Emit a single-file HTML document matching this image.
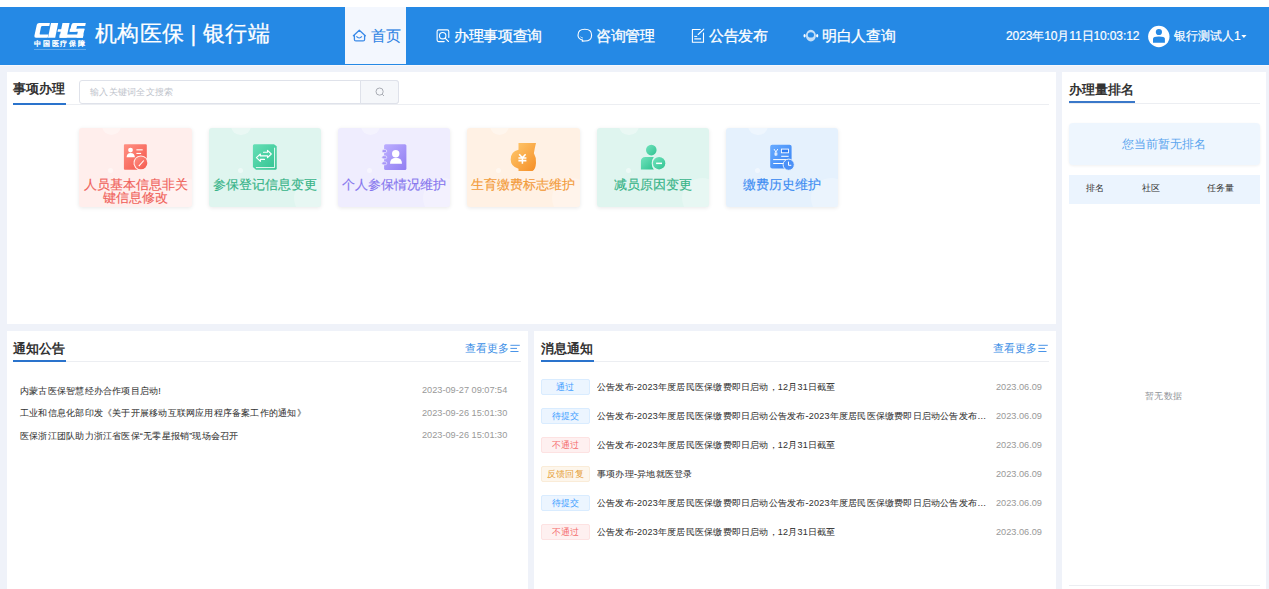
<!DOCTYPE html>
<html><head><meta charset="utf-8">
<style>
*{margin:0;padding:0;box-sizing:border-box}
html,body{width:1269px;height:589px;overflow:hidden}
body{background:#eff2f9;font-family:"Liberation Sans",sans-serif;position:relative;color:#333}
.a{position:absolute;white-space:nowrap;line-height:1}
#top{position:absolute;left:0;top:0;width:1269px;height:7px;background:#fff}
#hdr{position:absolute;left:0;top:7px;width:1269px;height:58px;background:#2589e5}
#hl{position:absolute;left:0;top:65px;width:1269px;height:1px;background:#f7f8fc}
.tab{position:absolute;left:345px;top:7px;width:61px;height:57px;background:#f3f7fe}
.nav{color:#fff;font-size:15px;letter-spacing:-0.35px;-webkit-text-stroke:0.3px currentColor}
.panel{position:absolute;background:#fff}
.ttl{font-size:13.2px;font-weight:bold;color:#333}
.uline{position:absolute;height:2px;background:#2a73cc}
.gline{position:absolute;height:1px;background:#eceef2}

.card{position:absolute;top:128px;width:112.3px;height:79px;border-radius:3px;box-shadow:0 1px 4px rgba(0,0,0,.09);overflow:hidden}
.card .c1{position:absolute;left:22.5px;top:-12.2px;width:19.6px;height:19.6px;border-radius:50%;background:rgba(255,255,255,.35)}
.card .c2{position:absolute;left:29px;top:40px;width:5px;height:5px;border-radius:50%;background:rgba(255,255,255,.45)}
.card .c3{position:absolute;left:85px;top:50px;width:40px;height:40px;border-radius:50%;background:rgba(255,255,255,.25)}
.card svg{position:absolute;left:38.6px;top:12px}
.card .t{position:absolute;left:0;top:50px;width:112.3px;text-align:center;font-size:13px;line-height:13px;white-space:normal;padding:0 4px;-webkit-text-stroke:0.15px currentColor}
.lst{font-size:9px;letter-spacing:0.22px;color:#333;-webkit-text-stroke:0.05px #333}
.msg{font-size:9px;letter-spacing:0.22px;color:#333;-webkit-text-stroke:0.05px #333;overflow:hidden;text-overflow:ellipsis;width:392px}
.dt{font-size:9.2px;color:#999}
.more{font-size:11px;color:#3a8ee6}
.tag{position:absolute;left:541px;width:49px;height:16px;border-radius:2px;font-size:9px;letter-spacing:0.3px;text-align:center;line-height:14px;border:1px solid}
.tb{background:#ecf5ff;border-color:#d9ecff;color:#409eff}
.tr{background:#fef0f0;border-color:#fde2e2;color:#f56c6c}
.ty{background:#fdf6ec;border-color:#faecd8;color:#e6a23c}
</style></head><body>
<div id="top"></div>
<div id="hdr"></div>
<div id="hl"></div>
<div class="tab"></div>

<!-- logo -->
<svg class="a" style="left:0;top:0" width="100" height="60" viewBox="0 0 100 60">
 <g fill="#fff">
  <path d="M39.2 23 L49.9 23 L49.3 26 L42.3 26 Q41.2 26 41 27.1 L39.7 33.4 Q39.5 34.6 40.7 34.6 L48.3 34.6 L47.7 37.7 L36 37.7 Q34 37.7 34.4 35.8 L36.8 24.8 Q37.2 23 39.2 23 Z"/>
  <polygon points="51,23 58.2,23 55.2,37.7 48,37.7"/>
  <polygon points="58,29.2 63,29.2 62.5,31.7 57.5,31.7"/>
  <polygon points="62.5,23.1 69.6,23.1 66.6,37.7 59.5,37.7"/>
  <polygon points="59.5,34.6 83.5,34.6 82.9,37.7 59.5,37.7"/>
  <path d="M73.7 23.1 L85.8 23.1 L85.2 26.1 L77 26.1 L75.6 31.7 L69.9 31.7 L71.4 24.9 Q71.8 23.1 73.7 23.1 Z"/>
  <polygon points="70,28.8 84.5,28.8 83.9,31.7 69.4,31.7"/>
  <polygon points="78.4,28.8 84.5,28.8 82.7,37.7 76.6,37.7"/>
 </g>
</svg>
<div class="a" style="left:34px;top:39.5px;font-size:7px;color:#fff;letter-spacing:1.8px;-webkit-text-stroke:0.35px #fff">中国医疗保障</div>
<div class="a" style="left:34px;top:49px;width:52px;height:1px;background:rgba(255,255,255,.28)"></div>

<div class="a" style="left:95px;top:23px;font-size:22px;color:#fff;letter-spacing:0.3px;-webkit-text-stroke:0.25px #fff">机构医保 | 银行端</div>

<!-- nav -->
<svg class="a" style="left:350px;top:26px" width="20" height="20" viewBox="0 0 20 20"><path d="M3.4 9.8 L9.3 4.3 L15.3 9.8" fill="none" stroke="#3a8ae8" stroke-width="1.3" stroke-linejoin="round" stroke-linecap="round"/><path d="M4.4 9 V13.4 Q4.4 14.9 5.9 14.9 H13.1 Q14.6 14.9 14.6 13.4 V9" fill="none" stroke="#3a8ae8" stroke-width="1.3"/><path d="M6.4 10.4 Q9.2 13.6 11.9 10.4" fill="none" stroke="#3a8ae8" stroke-width="1.2"/></svg>
<div class="a nav" style="left:371px;top:28px;color:#2f84e4;-webkit-text-stroke:0.1px #2f84e4">首页</div>

<svg class="a" style="left:433px;top:26px" width="20" height="20" viewBox="0 0 20 20"><path d="M15.8 11.5 V5.4 Q15.8 3.9 14.3 3.9 H5.6 Q4.1 3.9 4.1 5.4 V14.1 Q4.1 15.6 5.6 15.6 H11.2" fill="none" stroke="#fff" stroke-width="1.1" stroke-linecap="round"/><circle cx="9.7" cy="9.7" r="3.2" fill="none" stroke="#fff" stroke-width="1.1"/><path d="M12.1 12.1 L15.5 15.5" stroke="#fff" stroke-width="1.1" stroke-linecap="round"/></svg>
<div class="a nav" style="left:454px;top:28px">办理事项查询</div>

<svg class="a" style="left:575px;top:26px" width="20" height="20" viewBox="0 0 20 20"><path d="M7.3 15.1 L7.6 14.1 Q3 12.8 3 9.2 Q3 3.3 9.8 3.3 Q16.6 3.3 16.6 9.2 Q16.6 15 9.8 15 Q8.6 15 7.3 15.1 Z" fill="none" stroke="#fff" stroke-width="1.1" stroke-linejoin="round"/><path d="M5.5 10.8 Q6.5 11.8 7.8 12" fill="none" stroke="#fff" stroke-width="0.9"/></svg>
<div class="a nav" style="left:596px;top:28px">咨询管理</div>

<svg class="a" style="left:688px;top:26px" width="20" height="20" viewBox="0 0 20 20"><path d="M12.2 3.5 H4.4 V16.3 H15.5 V7.1" fill="none" stroke="#fff" stroke-width="1.1" stroke-linecap="round" stroke-linejoin="round"/><path d="M10.2 8.5 L15.8 3.2" stroke="#fff" stroke-width="1.1" stroke-linecap="round"/><path d="M6.6 10.4 H8.8" stroke="#fff" stroke-width="1" stroke-linecap="round"/><rect x="6.3" y="12" width="6.8" height="1.7" fill="rgba(255,255,255,.7)"/></svg>
<div class="a nav" style="left:709px;top:28px">公告发布</div>

<svg class="a" style="left:801px;top:26px" width="20" height="20" viewBox="0 0 20 20"><path fill-rule="evenodd" d="M4.9 9.6 A5 5.9 0 1 0 14.9 9.6 A5 5.9 0 1 0 4.9 9.6 Z M6.8 8.9 A3.1 2.7 0 1 0 13 8.9 A3.1 2.7 0 1 0 6.8 8.9 Z" fill="rgba(255,255,255,.72)"/><ellipse cx="3.6" cy="9.8" rx="1.1" ry="1.7" fill="#fff"/><ellipse cx="16.2" cy="9.8" rx="1.1" ry="1.7" fill="#fff"/></svg>
<div class="a nav" style="left:822px;top:28px">明白人查询</div>

<div class="a" style="left:1006px;top:30px;font-size:12px;letter-spacing:-0.1px;color:#fff;-webkit-text-stroke:0.2px #fff">2023年10月11日10:03:12</div>
<svg class="a" style="left:1145px;top:24px" width="28" height="26" viewBox="0 0 28 26"><circle cx="13.8" cy="12.5" r="10.7" fill="#fff"/><circle cx="13.9" cy="8" r="3.1" fill="#2589e5"/><path d="M8 18.8 V14.6 Q8 12.4 13.9 12.4 Q19.9 12.4 19.9 14.6 V18.8 Z" fill="#2589e5"/></svg>
<div class="a" style="left:1174px;top:30px;font-size:12px;color:#fff;-webkit-text-stroke:0.2px #fff">银行测试人1</div>
<svg class="a" style="left:1240px;top:34px" width="8" height="5" viewBox="0 0 8 5"><path d="M1.3 1 L6.5 1 L3.9 4Z" fill="#fff"/></svg>

<!-- panels -->
<div class="panel" style="left:7px;top:72px;width:1049px;height:252px"></div>
<div class="panel" style="left:1062px;top:72px;width:204px;height:517px"></div>
<div class="panel" style="left:7px;top:331px;width:521px;height:258px"></div>
<div class="panel" style="left:534px;top:331px;width:522px;height:258px"></div>

<!-- 事项办理 -->
<div class="a ttl" style="left:13px;top:82px">事项办理</div>
<div class="gline" style="left:13px;top:104px;width:1036px"></div>
<div class="uline" style="left:13px;top:103px;width:53px"></div>
<div class="a" style="left:79px;top:80px;width:320px;height:24px;border:1px solid #dfe2ea;border-radius:3px;background:#fff"></div>
<div class="a" style="left:360px;top:80px;width:39px;height:24px;border:1px solid #dfe2ea;border-radius:0 3px 3px 0;background:#f5f7fa"></div>
<svg class="a" style="left:375px;top:87px" width="10" height="10" viewBox="0 0 10 10"><circle cx="4.6" cy="4.6" r="3.6" fill="none" stroke="#a0a4ab" stroke-width="0.9"/><path d="M7.2 7.2 L9 9" stroke="#a0a4ab" stroke-width="0.9"/></svg>
<div class="a" style="left:90px;top:88px;font-size:9px;letter-spacing:0.3px;color:#c0c4cc">输入关键词全文搜索</div>

<div class="card" style="left:79.4px;background:#ffeeec"><div class="c1"></div><div class="c2"></div><div class="c3"></div><svg width="35" height="35" viewBox="0 0 35 35"><defs><linearGradient id="g1" x1="0" y1="0" x2="1" y2="1"><stop offset="0" stop-color="#ff9184"/><stop offset="1" stop-color="#f4554a"/></linearGradient></defs>
<path d="M6.9 4.2 H27.8 Q28.8 4.2 28.8 5.2 V18.3 A7.5 7.5 0 1 0 19.7 29.7 H6.9 Q5.9 29.7 5.9 28.7 V5.2 Q5.9 4.2 6.9 4.2 Z" fill="url(#g1)"/>
<circle cx="12.5" cy="10.1" r="2.4" fill="#fff"/><path d="M8.6 17.2 Q8.8 12.9 12.7 12.9 Q16.6 12.9 16.9 17.2 Z" fill="#fff"/>
<rect x="18.4" y="9.3" width="6.3" height="1.1" fill="#fff"/><rect x="18.4" y="12.9" width="4.7" height="1.1" fill="#fff"/>
<circle cx="22.9" cy="22.9" r="6.4" fill="url(#g1)"/>
<path d="M20.8 26.1 L25.8 20.5" stroke="#fff" stroke-width="1.1"/></svg><div class="t" style="color:#f0625a">人员基本信息非关键信息修改</div></div>
<div class="card" style="left:208.7px;background:#dff5ef"><div class="c1"></div><div class="c2"></div><div class="c3"></div><svg width="35" height="35" viewBox="0 0 35 35"><defs><linearGradient id="g2" x1="0" y1="0" x2="1" y2="1"><stop offset="0" stop-color="#66dfb6"/><stop offset="1" stop-color="#32c391"/></linearGradient></defs>
<path d="M7.4 4.2 H27 L29.7 6.2 V28.2 Q29.7 29.7 28.2 29.7 H9 L5.9 27 V5.7 Q5.9 4.2 7.4 4.2Z" fill="url(#g2)"/>
<path d="M8.9 27.6 H27.6 V7.7" fill="none" stroke="#fff" stroke-width="0.9"/>
<path d="M16.5 12.2 H20.5 V10.3 L24.3 14 L20.5 17.7 V15.9 H13.4 V14 L9.4 17.6 L13.4 21.3 V19.4 H17.5" fill="none" stroke="#fff" stroke-width="1.1" stroke-linejoin="round" stroke-linecap="round"/></svg><div class="t" style="color:#36b387">参保登记信息变更</div></div>
<div class="card" style="left:338.0px;background:#efedfe"><div class="c1"></div><div class="c2"></div><div class="c3"></div><svg width="35" height="35" viewBox="0 0 35 35"><defs><linearGradient id="g3" x1="0" y1="0" x2="1" y2="1"><stop offset="0" stop-color="#bcaeff"/><stop offset="1" stop-color="#917ef2"/></linearGradient></defs>
<rect x="7.1" y="4.2" width="22.3" height="25.8" rx="1.5" fill="url(#g3)"/>
<rect x="4.9" y="9.6" width="4.8" height="3" rx="1.5" fill="#a797f8" stroke="#f0edfe" stroke-width="0.7"/>
<rect x="4.9" y="15.8" width="4.8" height="3" rx="1.5" fill="#a797f8" stroke="#f0edfe" stroke-width="0.7"/>
<rect x="4.9" y="21.8" width="4.8" height="3" rx="1.5" fill="#a797f8" stroke="#f0edfe" stroke-width="0.7"/>
<circle cx="18.7" cy="13.7" r="3.7" fill="#fff"/><path d="M13 23.8 Q13 17.8 19 17.8 Q25 17.8 25 23.8 Z" fill="#fff"/></svg><div class="t" style="color:#8676ee">个人参保情况维护</div></div>
<div class="card" style="left:467.3px;background:#fff1e4"><div class="c1"></div><div class="c2"></div><div class="c3"></div><svg width="35" height="35" viewBox="0 0 35 35"><defs><linearGradient id="g4" x1="0" y1="0" x2="1" y2="1"><stop offset="0" stop-color="#ffcb70"/><stop offset="1" stop-color="#f58e26"/></linearGradient></defs>
<path d="M12.5 3 H30 Q28.6 8.5 27.9 13.2 Q30.5 17.5 30 23 Q29.5 30 26.5 30.9 H12.5 V28.8 Q4.7 26.5 4.7 19.5 Q4.7 11.5 12.5 9.8 Z" fill="url(#g4)"/>
<path d="M13.2 14.2 L16.4 17.8 L19.6 14.2 M12.4 18 H20.4 M12.4 20.6 H20.4 M16.4 17.8 V23.8" fill="none" stroke="#fff" stroke-width="1.55"/></svg><div class="t" style="color:#f39b3a">生育缴费标志维护</div></div>
<div class="card" style="left:596.6px;background:#dff5ef"><div class="c1"></div><div class="c2"></div><div class="c3"></div><svg width="35" height="35" viewBox="0 0 35 35"><defs><linearGradient id="g5" x1="0" y1="0" x2="1" y2="1"><stop offset="0" stop-color="#72e3bd"/><stop offset="1" stop-color="#30c391"/></linearGradient></defs>
<circle cx="16.3" cy="10.1" r="5.3" fill="url(#g5)"/>
<path d="M5.9 29.4 V21.5 Q5.9 16.9 10.5 16.9 H18.8 Q16.7 19.5 16.7 23.2 Q16.7 27 18.8 29.4 Z" fill="url(#g5)"/>
<circle cx="24.1" cy="23.2" r="6.2" fill="url(#g5)"/>
<rect x="21.1" y="22.6" width="5.9" height="1.5" fill="#fff"/></svg><div class="t" style="color:#36b387">减员原因变更</div></div>
<div class="card" style="left:725.9px;background:#e5f1fd"><div class="c1"></div><div class="c2"></div><div class="c3"></div><svg width="35" height="35" viewBox="0 0 35 35"><defs><linearGradient id="g6" x1="0" y1="0" x2="1" y2="1"><stop offset="0" stop-color="#68abff"/><stop offset="1" stop-color="#3783f4"/></linearGradient></defs>
<rect x="6.2" y="4.75" width="21.4" height="23.75" rx="2" fill="url(#g6)"/>
<path d="M10 9 L11.9 12 L13.8 9 M11.9 12 V16 M10.3 13.2 H13.5 M10.3 14.8 H13.5" fill="none" stroke="#fff" stroke-width="0.9"/>
<rect x="17.4" y="9.1" width="7.1" height="3.7" fill="#2f7df2" stroke="#fff" stroke-width="0.9"/>
<path d="M17.2 16.3 H24.7 M9.2 19.6 H25.5 M9.2 23.5 H19.6" fill="none" stroke="#fff" stroke-width="1"/>
<circle cx="24.7" cy="24.7" r="5.6" fill="#4b90f7" stroke="#e6f2fd" stroke-width="1"/>
<path d="M24.5 21.6 V25.3 H27.3" fill="none" stroke="#fff" stroke-width="1"/></svg><div class="t" style="color:#3d8cf2">缴费历史维护</div></div>

<!-- 通知公告 -->
<div class="a ttl" style="left:13px;top:342px">通知公告</div>
<div class="gline" style="left:13px;top:361px;width:508px"></div>
<div class="uline" style="left:13px;top:360px;width:53px"></div>
<div class="a more" style="left:465px;top:343px">查看更多</div><svg class="a" style="left:510px;top:344px" width="11" height="9" viewBox="0 0 11 9"><path d="M0.4 1.3 H9.8 M0.4 4.4 H7 M0.4 7.5 H8.5" stroke="#4a94e8" stroke-width="1"/></svg>
<div class="a lst" style="left:20px;top:386.7px">内蒙古医保智慧经办合作项目启动!</div>
<div class="a lst" style="left:20px;top:409.2px">工业和信息化部印发《关于开展移动互联网应用程序备案工作的通知》</div>
<div class="a lst" style="left:20px;top:431.7px">医保浙江团队助力浙江省医保“无零星报销”现场会召开</div>
<div class="a dt" style="left:422px;top:386px">2023-09-27 09:07:54</div>
<div class="a dt" style="left:422px;top:408.5px">2023-09-26 15:01:30</div>
<div class="a dt" style="left:422px;top:431px">2023-09-26 15:01:30</div>

<!-- 消息通知 -->
<div class="a ttl" style="left:541px;top:342px">消息通知</div>
<div class="gline" style="left:541px;top:361px;width:508px"></div>
<div class="uline" style="left:541px;top:360px;width:53px"></div>
<div class="a more" style="left:993px;top:343px">查看更多</div><svg class="a" style="left:1038px;top:344px" width="11" height="9" viewBox="0 0 11 9"><path d="M0.4 1.3 H9.8 M0.4 4.4 H7 M0.4 7.5 H8.5" stroke="#4a94e8" stroke-width="1"/></svg>
<div class="tag tb" style="top:379px">通过</div>
<div class="a msg" style="left:597px;top:383px">公告发布-2023年度居民医保缴费即日启动，12月31日截至</div>
<div class="a dt" style="left:996px;top:383px">2023.06.09</div>
<div class="tag tb" style="top:408px">待提交</div>
<div class="a msg" style="left:597px;top:412px">公告发布-2023年度居民医保缴费即日启动公告发布-2023年度居民医保缴费即日启动公告发布…</div>
<div class="a dt" style="left:996px;top:412px">2023.06.09</div>
<div class="tag tr" style="top:437px">不通过</div>
<div class="a msg" style="left:597px;top:441px">公告发布-2023年度居民医保缴费即日启动，12月31日截至</div>
<div class="a dt" style="left:996px;top:441px">2023.06.09</div>
<div class="tag ty" style="top:466px">反馈回复</div>
<div class="a msg" style="left:597px;top:470px">事项办理-异地就医登录</div>
<div class="a dt" style="left:996px;top:470px">2023.06.09</div>
<div class="tag tb" style="top:495px">待提交</div>
<div class="a msg" style="left:597px;top:499px">公告发布-2023年度居民医保缴费即日启动公告发布-2023年度居民医保缴费即日启动公告发布…</div>
<div class="a dt" style="left:996px;top:499px">2023.06.09</div>
<div class="tag tr" style="top:524px">不通过</div>
<div class="a msg" style="left:597px;top:528px">公告发布-2023年度居民医保缴费即日启动，12月31日截至</div>
<div class="a dt" style="left:996px;top:528px">2023.06.09</div>

<!-- 办理量排名 -->
<div class="a ttl" style="left:1069px;top:83px">办理量排名</div>
<div class="gline" style="left:1069px;top:103px;width:191px"></div>
<div class="uline" style="left:1069px;top:101px;width:66px;background:#3a78c9"></div>
<div class="a" style="left:1069px;top:123px;width:191px;height:42px;background:#eef6fe;border-radius:4px;box-shadow:0 1px 3px rgba(0,0,0,.06)"></div>
<div class="a" style="left:1122px;top:138px;font-size:12px;color:#5aa5ee">您当前暂无排名</div>
<div class="a" style="left:1069px;top:175px;width:191px;height:29px;background:#ebf4fe"></div>
<div class="a" style="left:1086px;top:184px;font-size:9px;color:#333">排名</div>
<div class="a" style="left:1142px;top:184px;font-size:9px;color:#333">社区</div>
<div class="a" style="left:1207px;top:184px;font-size:9px;color:#333">任务量</div>
<div class="a" style="left:1145px;top:392px;font-size:9px;letter-spacing:0.4px;color:#909399">暂无数据</div>
<div class="gline" style="left:1069px;top:585px;width:191px"></div>
</body></html>
